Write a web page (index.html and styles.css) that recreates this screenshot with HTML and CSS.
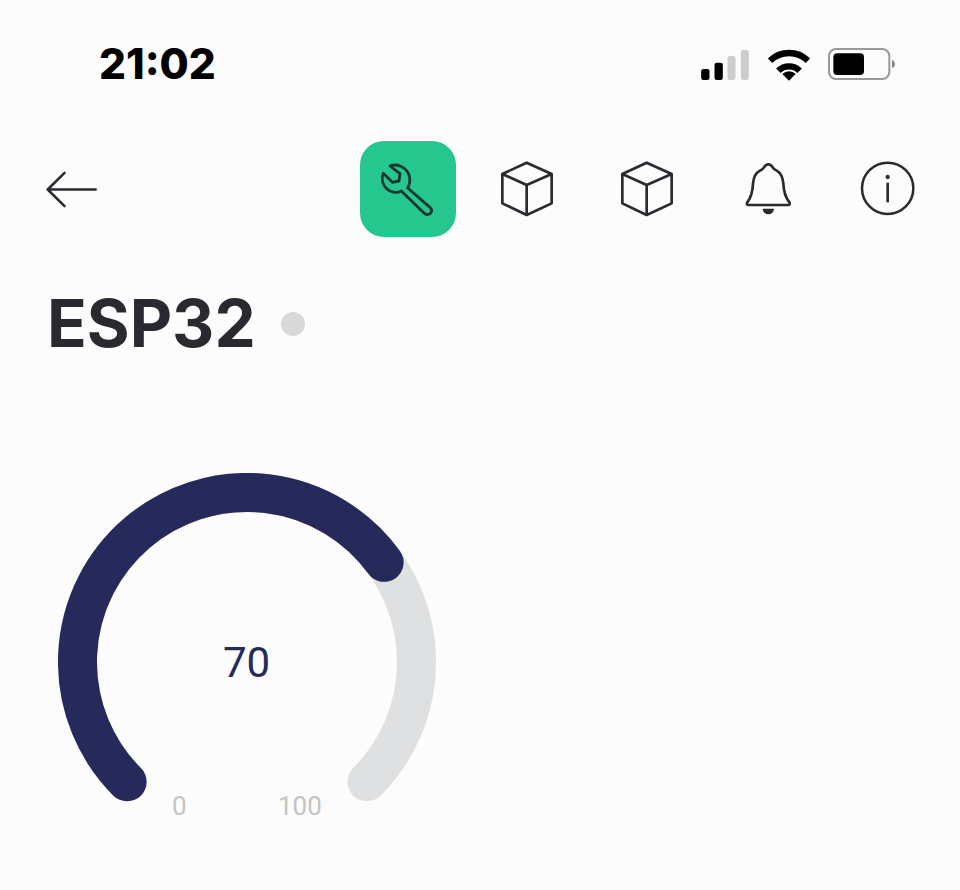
FILE: index.html
```html
<!DOCTYPE html>
<html lang="en">
<head>
<meta charset="utf-8">
<title>ESP32</title>
<link rel="stylesheet" href="styles.css">
</head>
<body>
<div class="status">
  <span class="time">21:02</span>
  <div class="status-icons">
    <svg class="ic-signal" viewBox="67 55 143 90"><rect x="67" y="112" width="25" height="33" rx="7" fill="#000"/><rect x="107" y="93" width="25" height="52" rx="7" fill="#000"/><rect x="146" y="73" width="24" height="72" rx="7" fill="#ccc"/><rect x="186" y="55" width="24" height="90" rx="7" fill="#ccc"/></svg>
    <svg class="ic-wifi" viewBox="264 50 126 99"><path d="M270 88A82 82 0 0 1 384 88M295 118A46 46 0 0 1 359 118" fill="none" stroke="#000" stroke-width="19"/><path d="M327 148L307 128A28 28 0 0 1 347 128Z" fill="#000"/></svg>
    <svg class="ic-battery" viewBox="444 52 204 96"><rect x="447" y="55" width="181" height="90" rx="21" fill="none" stroke="#999" stroke-width="6"/><rect x="460" y="68" width="92" height="65" rx="12" fill="#000"/><path d="M636 87C642 90 645 95 645 100C645 105 642 110 636 113Z" fill="#888"/></svg>
  </div>
</div>
<nav class="nav">
  <svg class="back" viewBox="44 62 160 116"><path d="M197 120H52M103 70L52 120L103 170" fill="none" stroke="#29292f" stroke-width="7.5" stroke-linecap="round" stroke-linejoin="round"/></svg>
  <div class="tabs">
    <div class="tab active">
      <svg class="tab-icon" viewBox="30 33 288 288"><path d="M120 108C140 100 166 110 176 132C182 148 180 162 173 174L240 232C248 240 245 248 238 252C232 255 226 253 222 249L154 183C140 190 122 188 110 176C98 164 93 146 100 130L127 157L147 153L150 131Z" fill="none" stroke="#15372f" stroke-width="8.5" stroke-linejoin="round"/></svg>
    </div>
    <div class="tab">
      <svg class="tab-icon" viewBox="390 33 288 288"><use href="#cube"/></svg>
    </div>
    <div class="tab">
      <svg class="tab-icon" viewBox="750 33 288 288"><g transform="translate(360 0)"><use href="#cube"/></g></svg>
    </div>
    <div class="tab">
      <svg class="tab-icon" viewBox="-30 -27 288 288"><path d="M115 43C108 43 105 47 102 52C99 57 96 59 90 62C76 69 71 80 69 100C68 125 65 140 52 157Q48 165 56 165H174Q182 165 178 157C165 140 161 125 160 100C158 80 153 69 140 62C134 59 131 57 128 52C125 47 122 43 115 43Z" fill="none" stroke="#29292f" stroke-width="8" stroke-linejoin="round"/><path d="M98 176H132A17 17 0 0 1 98 176Z" fill="#29292f"/></svg>
    </div>
    <div class="tab">
      <svg class="tab-icon" viewBox="330 -27 288 288"><circle cx="473" cy="115" r="77" fill="none" stroke="#29292f" stroke-width="7.5"/><circle cx="473" cy="81" r="6.5" fill="#29292f"/><path d="M473 98V157" stroke="#29292f" stroke-width="8"/></svg>
    </div>
  </div>
</nav>
<svg class="defs" aria-hidden="true"><defs><g id="cube" fill="none" stroke="#29292f" stroke-width="8" stroke-linejoin="round"><path d="M530 98L605 132V220L530 255L457 220V132Z"/><path d="M457 132L530 165L605 132M530 165V255"/></g></defs></svg>
<div class="title-row">
  <h1 class="title">ESP32</h1>
  <span class="dot"></span>
</div>
<div class="gauge">
  <svg class="gauge-arc" viewBox="0 0 378 350">
    <path d="M69.15 308.85A169.5 169.5 0 1 1 308.85 308.85" class="track"/>
    <path d="M69.15 308.85A169.5 169.5 0 1 1 326.13 89.37" class="value"/>
  </svg>
  <span class="gauge-value">70</span>
  <span class="gauge-min">0</span>
  <span class="gauge-max">100</span>
</div>
</body>
</html>
```
FILE: styles.css
```css
html, body {
  margin: 0;
  height: 890px;
  overflow: hidden;
  background: #fcfcfc;
}

.status {
  display: flex;
  justify-content: space-between;
  align-items: center;
  height: 128px;
  padding: 0 65px 0 99px;
  box-sizing: border-box;
}

.time {
  font: 800 42.3px/1 Inter, sans-serif;
  color: #000;
}

.status-icons {
  display: flex;
  align-items: center;
  gap: 19px;
  margin-right: -1px;
}

.ic-signal { width: 48px; height: 30px; margin-top: 1px; }
.ic-wifi { width: 42px; height: 33px; margin-right: -1px; }
.ic-battery { width: 68px; height: 32px; }

.nav {
  display: flex;
  justify-content: space-between;
  align-items: center;
  margin-top: 13px;
  padding: 0 24px 0 45px;
}

.back { width: 53px; height: 39px; }

.tabs {
  display: flex;
  gap: 24px;
}

.tab {
  width: 96px;
  height: 96px;
  border-radius: 24px;
}

.tab.active { background: #25c78e; }

.tab-icon {
  display: block;
  width: 96px;
  height: 96px;
}

.defs {
  position: absolute;
  width: 0;
  height: 0;
}

.title-row {
  display: flex;
  align-items: center;
  gap: 25px;
  margin-top: 47px;
  padding-left: 47px;
}

.title {
  margin: 0;
  font: 700 65.5px/80px Inter, sans-serif;
  color: #29292f;
}

.dot {
  width: 24px;
  height: 24px;
  border-radius: 50%;
  background: #d9d9d9;
}

.gauge {
  position: relative;
  width: 378px;
  height: 350px;
  margin: 109px 0 0 58px;
}

.gauge-arc {
  display: block;
  width: 378px;
  height: 350px;
}

.track, .value {
  fill: none;
  stroke-width: 39;
  stroke-linecap: round;
}

.track { stroke: #dfe0e2; }
.value { stroke: #252a5a; }

.gauge-value, .gauge-min, .gauge-max {
  position: absolute;
  font-family: Roboto, sans-serif;
  line-height: 1;
}

.gauge-value {
  left: 165px;
  top: 169px;
  font-size: 42px;
  color: #252a5a;
}

.gauge-min, .gauge-max {
  top: 320px;
  font-size: 26px;
  color: #c4c4c4;
}

.gauge-min { left: 114px; }
.gauge-max { left: 220px; }
```
